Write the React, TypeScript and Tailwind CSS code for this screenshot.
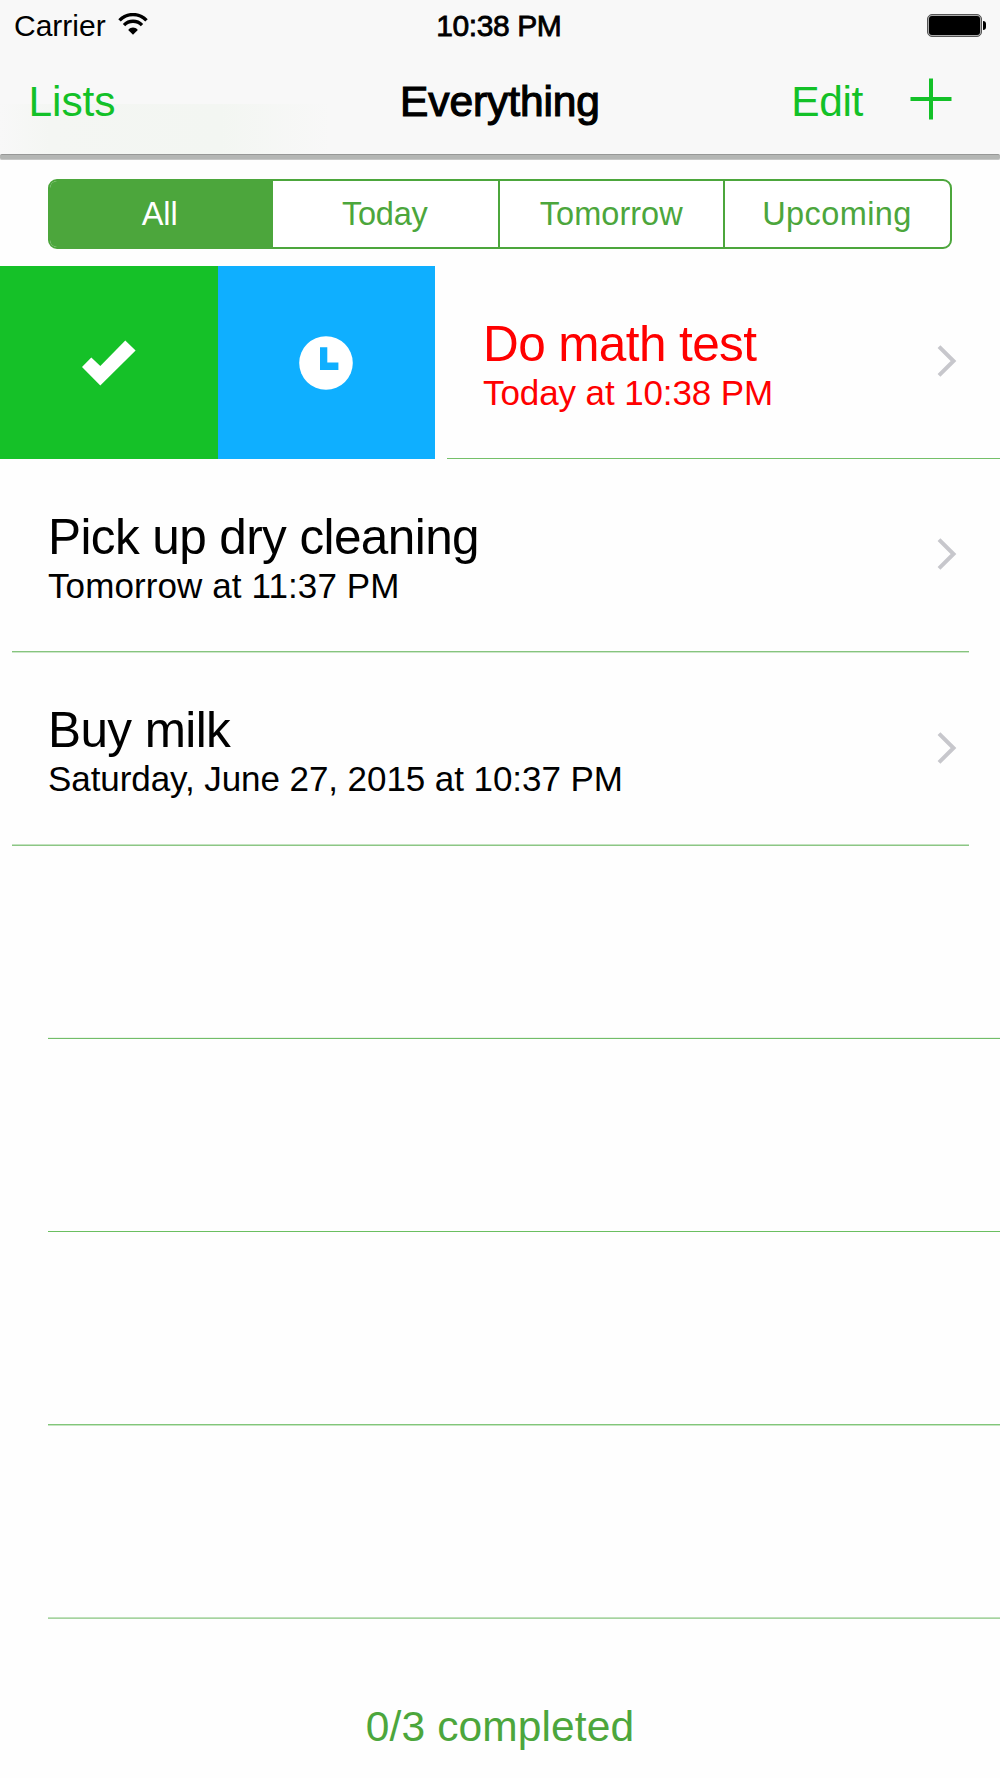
import React from "react";

const tabs = [
  { label: "All", cell: "w-[222.5px] bg-[#4ca63c] text-white", text: "-ml-[3px]" },
  { label: "Today", cell: "w-[225.5px]", text: "tracking-[-0.2px] -ml-px" },
  { label: "Tomorrow", cell: "w-[224.5px] border-l-2 border-[#4ca63c]", text: "tracking-[0.05px]" },
  { label: "Upcoming", cell: "flex-1 border-l-2 border-[#4ca63c]", text: "tracking-[0.4px]" },
];

const emptyRows = [
  "h-[193px] border-[#eaf6e8] bg-[#72bd69]",
  "h-[194px] border-[#6abf60] bg-[#fefefe]",
  "h-[193px] border-[#82c67a] bg-[#c6e5c2]",
  "h-[193px] border-[#c0e1bc] bg-[#a6d3a0]",
];

function Wifi() {
  return (
    <svg width="30" height="23" viewBox="0 0 30 23" className="-mt-[2px] ml-[12px]" fill="none" stroke="#000">
      <path d="M1.5 7.4C9 -0.4 21 -0.4 28.5 7.4" strokeWidth="3.4" />
      <path d="M6 12.1C11 7 19 7 24 12.1" strokeWidth="3.4" />
      <path d="M10.2 16.9C13 13.8 17 13.8 19.8 16.9L15 21.8Z" fill="#000" stroke="none" />
    </svg>
  );
}

function Battery() {
  return (
    <div className="flex items-center">
      <div className="h-[23.5px] w-[55px] rounded-[5px] border border-[#555] bg-[#aaa] p-px">
        <div className="h-full w-full rounded-[3px] bg-black" />
      </div>
      <div className="ml-px h-[9px] w-[3.5px] rounded-r-full bg-black" />
    </div>
  );
}

function Chevron() {
  return (
    <svg width="20" height="32" viewBox="0 0 20 32" className="-mt-[2px] mr-[43px] shrink-0" fill="none">
      <path d="M2 1.7L16.5 16L2 30.3" stroke="#c7c7cc" strokeWidth="4" />
    </svg>
  );
}

function TaskText({ title, due, dueClass }: { title: string; due: string; dueClass: string }) {
  return (
    <div className="flex-1 whitespace-nowrap pt-[5px]">
      <div className="text-[49.5px] leading-[54px] tracking-[-0.6px]">{title}</div>
      <div className={"mt-[2px] text-[35px] leading-[40px] " + dueClass}>{due}</div>
    </div>
  );
}

export default function App() {
  return (
    <div className="flex h-[1778px] w-[1000px] flex-col overflow-hidden bg-[#fefefe] font-['Liberation_Sans',Arial,sans-serif] text-black">
      <header className="h-[160px] shrink-0 bg-[#f8f8f8]">
        <div className="grid h-[50px] grid-cols-3 items-center pl-[14px] pr-[13.5px] text-[30px] leading-[50px]">
          <div className="flex items-center">
            <span className="pt-px">Carrier</span>
            <Wifi />
          </div>
          <div className="pr-[3px] pt-px text-center tracking-[-0.4px] [-webkit-text-stroke:0.8px_#000]">10:38 PM</div>
          <div className="flex justify-end">
            <Battery />
          </div>
        </div>
        <div className="h-[104px] bg-[linear-gradient(to_right,#f8f8f8,#f4f6f3_5%,#f3f6f2_22%,#f8f8f8_33%)] bg-[length:100%_50px] bg-bottom bg-no-repeat">
          <div className="grid h-[104px] grid-cols-3 items-center text-[42.5px]">
            <div className="pl-[28.5px] tracking-[-0.1px] text-[#13c128]">Lists</div>
            <div className="text-center tracking-[-0.1px] [-webkit-text-stroke:1.2px_#000]">Everything</div>
            <div className="flex items-center justify-end pr-[48px] text-[#13c128]">
              <span className="tracking-[-0.4px]">Edit</span>
              <svg width="42" height="42" viewBox="0 0 42 42" className="-mt-[6px] ml-[47px]">
                <path d="M21 0.5V41.5M0.5 21H41.5" stroke="#13c128" strokeWidth="4" />
              </svg>
            </div>
          </div>
        </div>
        <div className="h-[6px] rounded-[2px] border-b border-t border-b-[#c6c7c6] border-t-[#979897] bg-[#b4b6b4]" />
      </header>

      <nav className="ml-[48px] mr-[48.5px] mt-[19px] flex h-[70px] shrink-0 overflow-hidden rounded-[9px] border-2 border-[#4ca63c] bg-white text-[32.5px] text-[#4ca63c]">
        {tabs.map((t) => (
          <div key={t.label} className={"flex items-center justify-center " + t.cell}>
            <span className={t.text}>{t.label}</span>
          </div>
        ))}
      </nav>

      <main className="mt-[17px] flex flex-col">
        <section className="flex h-[193px]">
          <div className="flex w-[217.5px] items-center justify-center bg-[#15c128]">
            <svg width="54" height="46" viewBox="0 0 54 46">
              <path d="M0 27L9.3 17.4L18.3 26L43.3 0.6L53.6 10.6L18.3 45.5Z" fill="#fff" />
            </svg>
          </div>
          <div className="flex w-[217.5px] items-center justify-center bg-[#0fafff]">
            <svg width="54" height="54" viewBox="0 0 54 54">
              <circle cx="27" cy="27" r="26.8" fill="#fff" />
              <path d="M21 11.3H28.3V26.6H39.4V34H21Z" fill="#0fafff" />
            </svg>
          </div>
          <div className="ml-3 flex flex-1 flex-col">
            <div className="flex flex-1 items-center pl-[36px] text-[#ff0000]">
              <TaskText title="Do math test" due="Today at 10:38 PM" dueClass="tracking-[-0.1px]" />
              <Chevron />
            </div>
            <div className="h-px bg-[#74c069]" />
          </div>
        </section>

        <section className="flex h-[194px] flex-col">
          <div className="flex flex-1 items-center pl-[48px]">
            <TaskText title="Pick up dry cleaning" due="Tomorrow at 11:37 PM" dueClass="tracking-[0.1px]" />
            <Chevron />
          </div>
          <div className="ml-3 mr-[31px] h-[2px] border-t border-[#86c47e] bg-[#cde7ca]" />
        </section>

        <section className="flex h-[193px] flex-col">
          <div className="flex flex-1 items-center pl-[48px]">
            <TaskText title="Buy milk" due="Saturday, June 27, 2015 at 10:37 PM" dueClass="tracking-[-0.07px]" />
            <Chevron />
          </div>
          <div className="ml-3 mr-[31px] h-[2px] border-t border-[#c3e2bf] bg-[#8cc685]" />
        </section>

        {emptyRows.map((line, i) => {
          const [height, ...colors] = line.split(" ");
          return (
            <div key={i} className={"flex flex-col justify-end pl-[48px] " + height}>
              <div className={"h-[2px] border-t " + colors.join(" ")} />
            </div>
          );
        })}
      </main>

      <footer className="mt-[84px] text-center text-[42.5px] leading-[48px] tracking-[0.1px] text-[#4ca63c]">0/3 completed</footer>
    </div>
  );
}
